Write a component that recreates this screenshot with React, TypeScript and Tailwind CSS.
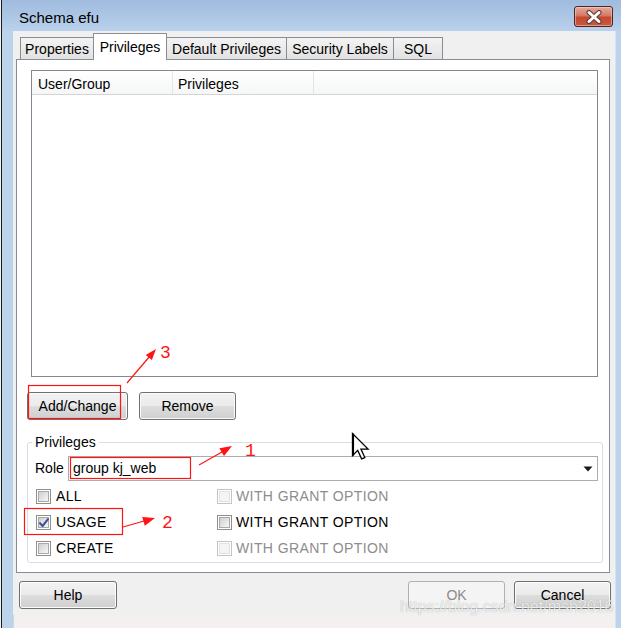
import React from "react";

type CheckProps = { checked?: boolean; disabled?: boolean };

function CheckBox({ checked, disabled }: CheckProps) {
  return (
    <div
      className={`relative flex h-[15px] w-[15px] shrink-0 items-center justify-center border bg-white ${
        disabled ? "border-[#c4c4c4]" : "border-[#8e8f8f]"
      }`}
    >
      <div
        className={`h-[11px] w-[11px] border ${
          disabled
            ? "border-[#e2e2e2] bg-[#f4f4f4]"
            : "border-[#a9a9a9] bg-gradient-to-br from-[#cfcfcf] to-[#f7f7f7]"
        }`}
      />
      {checked && (
        <svg className="absolute left-[1px] top-[1px]" width="12" height="12" viewBox="0 0 12 12">
          <path d="M2 6.2 L4.6 9 L10 2.2" fill="none" stroke="#3f5495" strokeWidth="2.1" strokeLinecap="round" strokeLinejoin="round" />
        </svg>
      )}
    </div>
  );
}

function Btn({ label, className, disabled }: { label: string; className: string; disabled?: boolean }) {
  return (
    <div
      className={`flex h-[28px] shrink-0 items-center justify-center rounded-[3px] border ${
        disabled
          ? "border-[#adb2b5] bg-[#f4f4f4] text-[#8a8a8a]"
          : "border-[#707070] bg-[linear-gradient(#f2f2f2,#ebebeb_48%,#dddddd_52%,#cfcfcf)] shadow-[inset_0_0_0_1px_#fbfbfb]"
      } ${className}`}
    >
      {label}
    </div>
  );
}

const tabs = [
  { label: "Properties", w: "w-[74px]" },
  { label: "Privileges", w: "w-[74px]", active: true },
  { label: "Default Privileges", w: "w-[121px]" },
  { label: "Security Labels", w: "w-[108px]" },
  { label: "SQL", w: "w-[50px]" },
];

const privRows = [
  { label: "ALL", grantDisabled: true },
  { label: "USAGE", checked: true, grantDisabled: false },
  { label: "CREATE", grantDisabled: true },
];

export default function App() {
  return (
    <div className="relative flex h-[628px] w-[621px] overflow-hidden bg-[#bcd3ec] font-['Liberation_Sans',Arial,sans-serif] text-[14px] text-black">
      <div className="w-px bg-[#eef2f6]" />
      <div className="w-px bg-[#1c1c1c]" />

      <div className="flex flex-1 flex-col">
        {/* title bar */}
        <div className="flex h-[31px] shrink-0 items-start bg-gradient-to-b from-[#9fbbdd] to-[#b9d1ec]">
          <div className="pl-[17px] pt-[9px] text-[15px] leading-[18px]">Schema efu</div>
          <div className="ml-auto mr-[8px] mt-[6px] flex h-[21px] w-[39px] items-center justify-center rounded-[3px] border border-[#4a2626] bg-[linear-gradient(#e6ab9c,#d47a64_45%,#c4492f_55%,#c9583d)] shadow-[inset_0_0_0_1px_rgba(255,220,210,0.5)]">
            <svg width="18" height="14" viewBox="0 0 18 14">
              <path d="M4 2.5 L14 11.5 M14 2.5 L4 11.5" stroke="#5a3a3a" strokeWidth="5" strokeLinecap="round" />
              <path d="M4 2.5 L14 11.5 M14 2.5 L4 11.5" stroke="#ffffff" strokeWidth="3" strokeLinecap="round" />
            </svg>
          </div>
        </div>

        <div className="flex flex-1">
          <div className="w-[11px] bg-[#bcd3ec]" />

          {/* client */}
          <div className="flex w-[602px] flex-col bg-[#f0f0f0]">
            {/* tabs */}
            <div className="flex h-[28px] items-end pl-[7px]">
              {tabs.map((t, i) =>
                t.active ? (
                  <div
                    key={t.label}
                    className={`relative z-10 -mb-px flex h-[27px] ${t.w} ${i > 0 ? "-ml-px" : ""} items-start justify-center border border-b-0 border-[#898c95] bg-white pt-[5px] leading-[16px]`}
                  >
                    {t.label}
                  </div>
                ) : (
                  <div
                    key={t.label}
                    className={`flex h-[22px] ${t.w} ${i > 0 ? "-ml-px" : ""} items-center justify-center border border-b-0 border-[#898c95] bg-gradient-to-b from-[#f3f3f3] to-[#e2e2e2] leading-[16px]`}
                  >
                    {t.label}
                  </div>
                )
              )}
            </div>

            {/* tab panel */}
            <div className="ml-[3px] mr-[5px] flex h-[514px] flex-col border border-[#898c95] bg-white">
              {/* list view */}
              <div className="ml-[14px] mr-[11px] mt-[10px] h-[307px] border border-[#828790] bg-white">
                <div className="flex h-[24px] border-b border-[#d5d5d5] bg-gradient-to-b from-white to-[#f5f6f7]">
                  <div className="flex w-[141px] items-center border-r border-[#e3e5e8] pl-[6px] pt-[3px]">User/Group</div>
                  <div className="flex w-[141px] items-center border-r border-[#e3e5e8] pl-[5px] pt-[3px]">Privileges</div>
                  <div className="flex-1" />
                </div>
              </div>

              {/* list buttons */}
              <div className="ml-[10px] mt-[15px] flex gap-[11px]">
                <Btn label="Add/Change" className="w-[101px]" />
                <Btn label="Remove" className="w-[97px]" />
              </div>

              {/* privileges group */}
              <fieldset className="ml-[10px] mt-[14px] w-[576px] rounded-[3px] border border-[#d5dfe5] px-0 pb-0">
                <legend className="ml-[4px] px-[3px] leading-[16px]">Privileges</legend>

                <div className="mt-[6px] flex h-[25px] items-center pl-[7px] pr-[4px]">
                  <div className="w-[33px]">Role</div>
                  <div className="flex h-full flex-1 items-center border border-[#acacac] bg-white pl-[4px] pr-[4px]">
                    <span>group kj_web</span>
                    <svg className="ml-auto" width="10" height="6" viewBox="0 0 10 6">
                      <path d="M0.5 0.5 L9.5 0.5 L5 5.5 Z" fill="#1a1a1a" />
                    </svg>
                  </div>
                </div>

                <div className="mt-[2px] flex flex-col pb-px">
                  {privRows.map((r) => (
                    <div key={r.label} className="flex h-[26px] items-center">
                      <div className="flex w-[189px] items-center gap-[5px] pl-[8px]">
                        <CheckBox checked={r.checked} />
                        <span className="tracking-[0.3px]">{r.label}</span>
                      </div>
                      <div className={`flex items-center gap-[4px] ${r.grantDisabled ? "text-[#8d8d8d]" : ""}`}>
                        <CheckBox disabled={r.grantDisabled} />
                        <span className="tracking-[0.4px]">WITH GRANT OPTION</span>
                      </div>
                    </div>
                  ))}
                </div>
              </fieldset>
            </div>

            {/* dialog buttons */}
            <div className="mt-[8px] flex pl-[6px] pr-[4px]">
              <Btn label="Help" className="w-[98px]" />
              <Btn label="OK" className="ml-auto w-[97px]" disabled />
              <Btn label="Cancel" className="ml-[9px] w-[97px]" />
            </div>

            <div className="mt-auto h-[13px] border-l border-[#d8d4d4] bg-[#f3f0ef]" />
          </div>

          <div className="flex-1 border-l border-[#d6e2ef] bg-[#bcd3ec]" />
        </div>
      </div>

      {/* annotations drawn over the screenshot */}
      <svg className="pointer-events-none absolute left-0 top-0" width="621" height="628" viewBox="0 0 621 628">
        <g fill="none" stroke="#ff1414" strokeWidth="1.2">
          <rect x="28.5" y="385.5" width="92" height="33" />
          <rect x="70.5" y="457.5" width="120" height="21" />
          <rect x="24.5" y="508.5" width="98" height="26" />
          <line x1="127" y1="383" x2="150" y2="356" />
          <line x1="199" y1="465" x2="222" y2="452" />
          <line x1="123" y1="527" x2="144" y2="521" />
        </g>
        <g fill="#ff1414">
          <polygon points="156,349 151.9,360.1 145.7,354.9" />
          <polygon points="232,446 224,456 219.4,448.2" />
          <polygon points="155,518 144.8,525.7 142.2,517.1" />
        </g>
        {/* mouse cursor */}
        <g transform="translate(352.5 433.5) scale(1.3)">
          <path d="M0 0 L0 17 L4 13 L7 19.5 L9.5 18.5 L6.5 12 L12 12 Z" fill="#ffffff" stroke="#000000" strokeWidth="1" strokeLinejoin="miter" />
          <line x1="0.4" y1="0" x2="0.4" y2="17" stroke="#000" strokeWidth="1.6" />
        </g>
      </svg>

      <div className="pointer-events-none absolute left-[160px] top-[343px] font-['Liberation_Mono',monospace] text-[18px] leading-[20px] text-[#ff1414]">3</div>
      <div className="pointer-events-none absolute left-[245px] top-[441px] font-['Liberation_Mono',monospace] text-[18px] leading-[20px] text-[#ff1414]">1</div>
      <div className="pointer-events-none absolute left-[162px] top-[513px] font-['Liberation_Mono',monospace] text-[18px] leading-[20px] text-[#ff1414]">2</div>

      <div className="pointer-events-none absolute left-[400px] top-[597px] text-[16px] leading-[20px] text-white/80 [text-shadow:0_0_1px_rgba(0,0,0,0.35)]">
        https://blog.csdn.net/msh2016
      </div>
    </div>
  );
}
